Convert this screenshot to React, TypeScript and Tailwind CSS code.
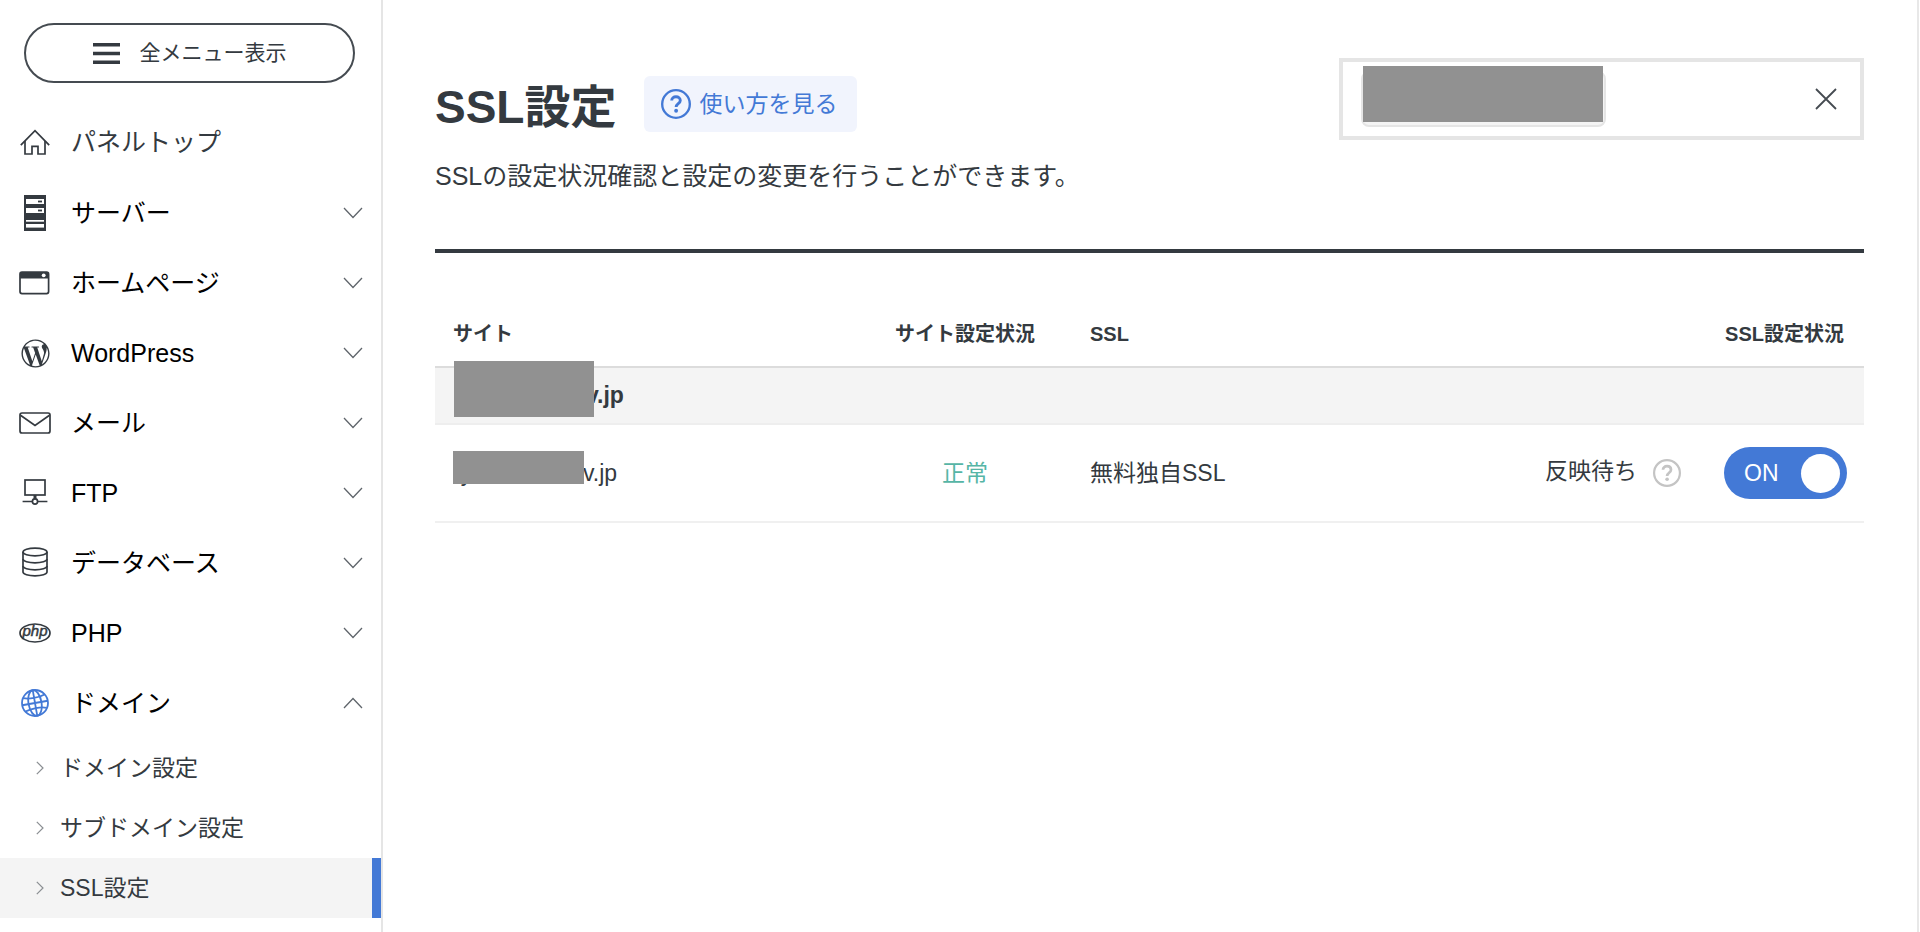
import { useState } from 'react';
import type { ReactNode } from 'react';
import { FaWordpressSimple } from 'react-icons/fa';

function HomeIcon() {
  return (
    <svg width="30" height="28" viewBox="0 0 30 28" fill="none" stroke="currentColor" strokeWidth="1.7">
      <path d="M.8 16.2 15 1.6l14.2 14.6" />
      <path d="M5 12v13h7v-7.6h6V25h7V12" />
    </svg>
  );
}

function ServerIcon() {
  return (
    <svg width="22" height="36" viewBox="0 0 22 36">
      <rect width="22" height="36" fill="currentColor" />
      <rect x="2" y="4" width="18" height="5" fill="#fff" />
      <rect x="2" y="13" width="18" height="5" fill="#fff" />
      <rect x="14" y="5.6" width="4" height="1.8" fill="currentColor" />
      <rect x="14" y="14.6" width="4" height="1.8" fill="currentColor" />
      <rect x="2" y="25" width="18" height="1.7" fill="#fff" />
      <rect x="2" y="29" width="18" height="3.6" fill="#fff" />
    </svg>
  );
}

function WindowIcon() {
  return (
    <svg width="32" height="24" viewBox="0 0 32 24">
      <rect x="1" y="1.2" width="28.6" height="21.4" rx="2" fill="none" stroke="currentColor" strokeWidth="1.7" />
      <path d="M1 7.4V3a2 2 0 0 1 2-2h24.6a2 2 0 0 1 2 2v4.4z" fill="currentColor" />
      <circle cx="24.7" cy="4.3" r="1.9" fill="#fff" />
    </svg>
  );
}

function MailIcon() {
  return (
    <svg width="32" height="22" viewBox="0 0 32 22" fill="none" stroke="currentColor" strokeWidth="1.7">
      <rect x="1" y="1" width="30" height="20" rx="2" />
      <path d="M1.5 3.2 16 13.4 30.5 3.2" />
    </svg>
  );
}

function FtpIcon() {
  return (
    <svg width="26" height="28" viewBox="0 0 26 28" fill="none" stroke="currentColor" strokeWidth="1.7">
      <rect x="3" y="1" width="20" height="15" />
      <path d="M.6 22.5H10M16 22.5h9.4" />
      <path d="M13 16v4" strokeWidth="3" />
      <circle cx="13" cy="22.5" r="2.6" />
    </svg>
  );
}

function DatabaseIcon() {
  return (
    <svg width="26" height="32" viewBox="0 0 26 32" fill="none" stroke="currentColor" strokeWidth="1.7">
      <ellipse cx="13" cy="5" rx="12" ry="3.8" />
      <path d="M1 5v20c0 2.1 5.4 3.8 12 3.8S25 27.1 25 25V5" />
      <path d="M1 12c0 2.1 5.4 3.8 12 3.8S25 14.1 25 12M1 19c0 2.1 5.4 3.8 12 3.8S25 21.1 25 19" />
    </svg>
  );
}

function PhpIcon() {
  return (
    <svg width="32" height="20" viewBox="0 0 32 20">
      <ellipse cx="16" cy="10" rx="15" ry="9" fill="none" stroke="currentColor" strokeWidth="1.7" />
      <text
        x="16"
        y="13"
        textAnchor="middle"
        fontSize="15"
        fontStyle="italic"
        fill="currentColor"
        stroke="currentColor"
        strokeWidth=".5"
      >
        php
      </text>
    </svg>
  );
}

function GlobeIcon() {
  return (
    <svg width="28" height="28" viewBox="0 0 28 28" fill="none" stroke="currentColor" strokeWidth="1.8">
      <circle cx="14" cy="14" r="13" />
      <g transform="rotate(-10 14 14)">
        <ellipse cx="14" cy="14" rx="6.5" ry="13" />
        <path d="M14 1v26M1 14h26M3.2 7.2c6 2.2 15.6 2.2 21.6 0M3.2 20.8c6-2.2 15.6-2.2 21.6 0" />
      </g>
    </svg>
  );
}

function HelpIcon({ size }: { size: number }) {
  return (
    <svg width={size} height={size} viewBox="0 0 28 28" fill="none" stroke="currentColor">
      <circle cx="14" cy="14" r="12.9" strokeWidth="2.2" />
      <path d="M10 10.8c0-2.2 1.7-3.6 4-3.6s4 1.4 4 3.5c0 3-3.9 3-3.9 6.2" strokeWidth="2.7" />
      <circle cx="14.1" cy="20.3" r="1.8" fill="currentColor" stroke="none" />
    </svg>
  );
}

function Chevron({ open }: { open: boolean }) {
  return (
    <svg width="20" height="12" viewBox="0 0 20 12" fill="none" stroke="#5f656b" strokeWidth="1.3">
      <path d={open ? 'M1 11 10 1.5 19 11' : 'M1 1l9 9.5L19 1'} />
    </svg>
  );
}

interface MenuItem {
  label: string;
  icon: ReactNode;
}

const menuItems: MenuItem[] = [
  { label: 'サーバー', icon: <ServerIcon /> },
  { label: 'ホームページ', icon: <WindowIcon /> },
  { label: 'WordPress', icon: <FaWordpressSimple className="size-[29px]" /> },
  { label: 'メール', icon: <MailIcon /> },
  { label: 'FTP', icon: <FtpIcon /> },
  { label: 'データベース', icon: <DatabaseIcon /> },
  { label: 'PHP', icon: <PhpIcon /> },
];

const domainLinks = ['ドメイン設定', 'サブドメイン設定', 'SSL設定'];

function Sidebar() {
  const current = 'SSL設定';

  return (
    <aside className="w-[383px] shrink-0 border-r-2 border-[#e5e5e5]">
      <div className="pt-[23px] pl-6 pr-[26px] pb-[25px]">
        <button className="flex h-[60px] w-full items-center justify-center gap-5 rounded-full border-2 border-[#454b51] text-[21px]">
          <svg width="27" height="21" viewBox="0 0 27 21" fill="#343a40">
            <path d="M0 0h27v3.4H0zM0 8.8h27v3.4H0zM0 17.6h27V21H0z" />
          </svg>
          全メニュー表示
        </button>
      </div>

      <nav className="text-[25px]">
        <a href="#top" className="flex h-[70px] items-center pl-[19px]">
          <span className="mr-5 flex w-8 justify-center">
            <HomeIcon />
          </span>
          パネルトップ
        </a>

        {menuItems.map(item => (
          <button key={item.label} className="flex h-[70px] w-full items-center pl-[19px] pr-[18px] text-left">
            <span className="mr-5 flex w-8 justify-center">{item.icon}</span>
            <span className="flex-1 pt-0.5 text-black">{item.label}</span>
            <Chevron open={false} />
          </button>
        ))}

        <button aria-expanded="true" className="flex h-[70px] w-full items-center pl-[19px] pr-[18px] text-left">
          <span className="mr-5 flex w-8 justify-center text-[#4379d6]">
            <GlobeIcon />
          </span>
          <span className="flex-1 pt-0.5 text-black">ドメイン</span>
          <Chevron open />
        </button>

        <ul className="text-[23px]">
          {domainLinks.map(label => (
            <li key={label}>
              <a
                href="#domain"
                className={
                  label === current
                    ? 'flex h-[60px] items-center gap-4 border-r-9 border-[#4379d6] bg-[#f4f4f4] pl-9'
                    : 'flex h-[60px] items-center gap-4 pl-9'
                }
              >
                <svg width="8" height="14" viewBox="0 0 8 14" fill="none" stroke="#8b8f93" strokeWidth="1.2">
                  <path d="M.8.8 7 7 .8 13.2" />
                </svg>
                {label}
              </a>
            </li>
          ))}
        </ul>
      </nav>
    </aside>
  );
}

function SslTable() {
  const [enabled, setEnabled] = useState(true);

  return (
    <table className="w-full table-fixed text-[23px]">
      <thead>
        <tr className="h-[65px] border-b-2 border-[#dcdcdc] text-xl">
          <th className="w-[423px] px-[18px] text-left">サイト</th>
          <th className="w-[214px] px-[18px] text-center">サイト設定状況</th>
          <th className="px-[18px] text-left">SSL</th>
          <th className="px-5 text-right">SSL設定状況</th>
        </tr>
      </thead>
      <tbody>
        <tr className="h-[57px] border-b-2 border-[#eeeeee] bg-[#f4f4f4]">
          <th colSpan={4} className="px-[18px] text-left">
            <div className="relative pl-[133px]">
              v.jp
              <span className="absolute left-px -top-[17px] h-[56px] w-[140px] bg-[#919191]" />
            </div>
          </th>
        </tr>
        <tr className="h-[98px] border-b-2 border-[#f0f0f0]">
          <td className="px-[18px]">
            <div className="relative flex">
              <span className="w-[130px]">ry</span>
              v.jp
              <span className="absolute left-0 -top-[5px] h-[33px] w-[131px] bg-[#919191]" />
            </div>
          </td>
          <td className="px-[18px] text-center text-[#56b5a6]">正常</td>
          <td className="px-[18px]">無料独自SSL</td>
          <td className="pr-[17px]">
            <div className="flex items-center justify-end">
              <span className="mr-4 pb-1">反映待ち</span>
              <button aria-label="反映待ちについて" className="mr-[43px] text-[#c4c4c4]">
                <HelpIcon size={28} />
              </button>
              <label
                className={
                  enabled
                    ? 'flex h-[52px] w-[123px] cursor-pointer items-center justify-between rounded-full bg-[#4379d6] pl-5 pr-[7px] text-[23px] text-white'
                    : 'flex h-[52px] w-[123px] cursor-pointer flex-row-reverse items-center justify-between rounded-full bg-[#b5b5b5] pl-[7px] pr-5 text-[23px] text-white'
                }
              >
                <input
                  type="checkbox"
                  className="sr-only"
                  checked={enabled}
                  onChange={e => setEnabled(e.target.checked)}
                />
                {enabled ? 'ON' : 'OFF'}
                <span className="size-[39px] rounded-full bg-white" />
              </label>
            </div>
          </td>
        </tr>
      </tbody>
    </table>
  );
}

export default function App() {
  return (
    <div className="flex min-h-screen bg-white font-['Liberation_Sans','Noto_Sans_CJK_JP',sans-serif] text-[#343a40]">
      <Sidebar />

      <main className="mr-px flex-1 border-r-2 border-[#e8e8e8] pt-[58px] pr-[53px] pl-[52px]">
        <header className="flex items-start justify-between border-b-4 border-[#343a40] pb-[53px]">
          <div className="pt-[18px]">
            <div className="flex h-14 items-center gap-7">
              <h1 className="pt-1.5 text-[46px] leading-none font-bold">SSL設定</h1>
              <a
                href="#help"
                className="flex h-14 items-center gap-2 rounded-md bg-[#f1f4fd] pr-5 pl-[17px] text-[23px] text-[#4379d6]"
              >
                <HelpIcon size={30} />
                使い方を見る
              </a>
            </div>
            <p className="mt-6 text-[25px] leading-10">SSLの設定状況確認と設定の変更を行うことができます。</p>
          </div>

          {/* Selected domain */}
          <div className="flex h-[82px] w-[525px] items-center justify-between border-4 border-[#e5e5e5] pr-[22px] pl-[18px]">
            <div className="relative h-[56px] w-[245px] rounded-lg border-2 border-[#e5e5e5] bg-[#f4f4f4]">
              <span className="absolute left-0 -top-[7px] h-[56px] w-[240px] bg-[#919191]" />
            </div>
            <button aria-label="クリア" className="p-px">
              <svg width="22" height="22" viewBox="0 0 22 22" fill="none" stroke="#454b51" strokeWidth="1.8">
                <path d="m1 1 20 20M21 1 1 21" />
              </svg>
            </button>
          </div>
        </header>

        <div className="pt-[49px]">
          <SslTable />
        </div>
      </main>
    </div>
  );
}
